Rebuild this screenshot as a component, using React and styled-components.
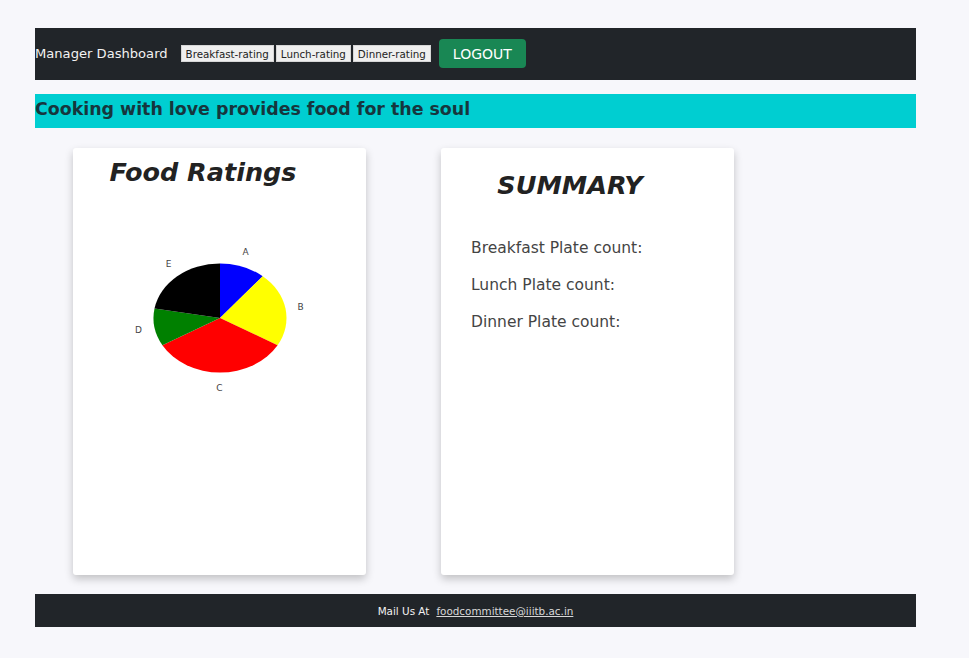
import React from "react";
import styled, { createGlobalStyle } from "styled-components";

const GlobalStyle = createGlobalStyle`
  body {
    margin: 0;
    background-color: #f7f7fb;
    font-family: "DejaVu Sans", "Liberation Sans", sans-serif;
    color: #212529;
  }
`;

const ratings = [
  { label: "A", value: 1, color: "#0000ff", lx: 145.5, ly: 33.5 },
  { label: "B", value: 2, color: "#ffff00", lx: 200.5, ly: 88.5 },
  { label: "C", value: 3, color: "#ff0000", lx: 119.5, ly: 169.5 },
  { label: "D", value: 1, color: "#008000", lx: 38.5, ly: 111.5 },
  { label: "E", value: 2, color: "#000000", lx: 68.5, ly: 45.5 },
];

function PieChart({ data }) {
  const cx = 120;
  const cy = 100;
  const rx = 66.5;
  const ry = 54.5;
  const total = data.reduce((s, d) => s + d.value, 0);
  const point = (deg) => {
    const r = (deg * Math.PI) / 180;
    return [cx + rx * Math.sin(r), cy - ry * Math.cos(r)];
  };
  let start = 0;
  const slices = data.map((d) => {
    const sweep = (d.value / total) * 360;
    const [x1, y1] = point(start);
    const [x2, y2] = point(start + sweep);
    const large = sweep > 180 ? 1 : 0;
    start += sweep;
    return {
      ...d,
      path: `M${cx},${cy} L${x1},${y1} A${rx},${ry} 0 ${large} 1 ${x2},${y2} Z`,
    };
  });

  return (
    <ChartSvg width="240" height="180" viewBox="0 0 240 180">
      {slices.map((s) => (
        <path key={s.label} d={s.path} fill={s.color} />
      ))}
      {slices.map((s) => (
        <text
          key={s.label + "-t"}
          x={s.lx}
          y={s.ly}
          fontSize="9"
          fill="#444"
          textAnchor="middle"
          dominantBaseline="central"
        >
          {s.label}
        </text>
      ))}
    </ChartSvg>
  );
}

export default function App() {
  return (
    <>
      <GlobalStyle />
      <Page>
        <NavBar>
          <Brand>Manager Dashboard</Brand>
          <TabGroup>
            <TabButton>Breakfast-rating</TabButton>
            <TabButton>Lunch-rating</TabButton>
            <TabButton>Dinner-rating</TabButton>
          </TabGroup>
          <LogoutButton>LOGOUT</LogoutButton>
        </NavBar>

        <Banner>Cooking with love provides food for the soul</Banner>

        <CardRow>
          <Card>
            <CardTitle $top={9}>Food Ratings</CardTitle>
            <PieChart data={ratings} />
          </Card>
          <Card>
            <CardTitle $top={22} $shift={35}>SUMMARY</CardTitle>
            <SummaryList>
              <SummaryItem>Breakfast Plate count:</SummaryItem>
              <SummaryItem>Lunch Plate count:</SummaryItem>
              <SummaryItem>Dinner Plate count:</SummaryItem>
            </SummaryList>
          </Card>
        </CardRow>

        <Footer>
          Mail Us At
          <MailLink href="#">foodcommittee@iiitb.ac.in</MailLink>
        </Footer>
      </Page>
    </>
  );
}

const Page = styled.div`
  width: 881px;
  margin-left: 35px;
  padding-top: 28px;
`;

const NavBar = styled.nav`
  display: flex;
  align-items: center;
  height: 52px;
  padding-bottom: 1px;
  box-sizing: border-box;
  background-color: #212529;
`;

const Brand = styled.span`
  color: #f2f2f2;
  font-size: 13.1px;
  margin-right: 13px;
`;

const TabGroup = styled.div`
  display: flex;
  gap: 2px;
`;

const TabButton = styled.button`
  font-family: "DejaVu Sans", sans-serif;
  font-size: 10.3px;
  height: 17px;
  padding: 0 4px;
  background-color: #efefef;
  color: #222;
  border: 1px solid #d6d6d6;
  border-radius: 0;
`;

const LogoutButton = styled.button`
  font-family: "DejaVu Sans", sans-serif;
  font-size: 14px;
  margin-left: 8px;
  width: 87px;
  height: 29px;
  background-color: #198754;
  color: #fff;
  border: none;
  border-radius: 4px;
`;

const Banner = styled.h4`
  margin: 14px 0 0;
  height: 34px;
  box-sizing: border-box;
  padding-bottom: 5px;
  display: flex;
  align-items: center;
  background-color: #00ced1;
  color: #16363d;
  font-size: 17.4px;
  font-weight: bold;
`;

const CardRow = styled.div`
  display: flex;
  gap: 75px;
  margin-top: 20px;
  padding-left: 38px;
`;

const Card = styled.div`
  width: 293px;
  height: 427px;
  background-color: #fff;
  border-radius: 3px;
  box-shadow: 0 4px 8px rgba(0, 0, 0, 0.22);
`;

const CardTitle = styled.h1`
  margin: ${(p) => p.$top}px 0 0;
  padding-right: ${(p) => p.$shift ?? 33}px;
  text-align: center;
  font-size: 25.5px;
  line-height: 1.2;
  font-style: italic;
  font-weight: bold;
  color: #222;
`;

const ChartSvg = styled.svg`
  display: block;
  margin: 30px auto 0;
  font-family: "DejaVu Sans", sans-serif;
`;

const SummaryList = styled.div`
  margin-top: 36px;
  padding-left: 30px;
`;

const SummaryItem = styled.p`
  margin: 0 0 15px;
  font-size: 15.5px;
  line-height: 22px;
  color: #444;
`;

const Footer = styled.footer`
  margin-top: 19px;
  height: 33px;
  display: flex;
  align-items: center;
  justify-content: center;
  background-color: #212529;
  color: #f2f2f2;
  font-size: 10.4px;
`;

const MailLink = styled.a`
  margin-left: 7px;
  color: #d8d8d8;
  text-decoration: underline;
`;
